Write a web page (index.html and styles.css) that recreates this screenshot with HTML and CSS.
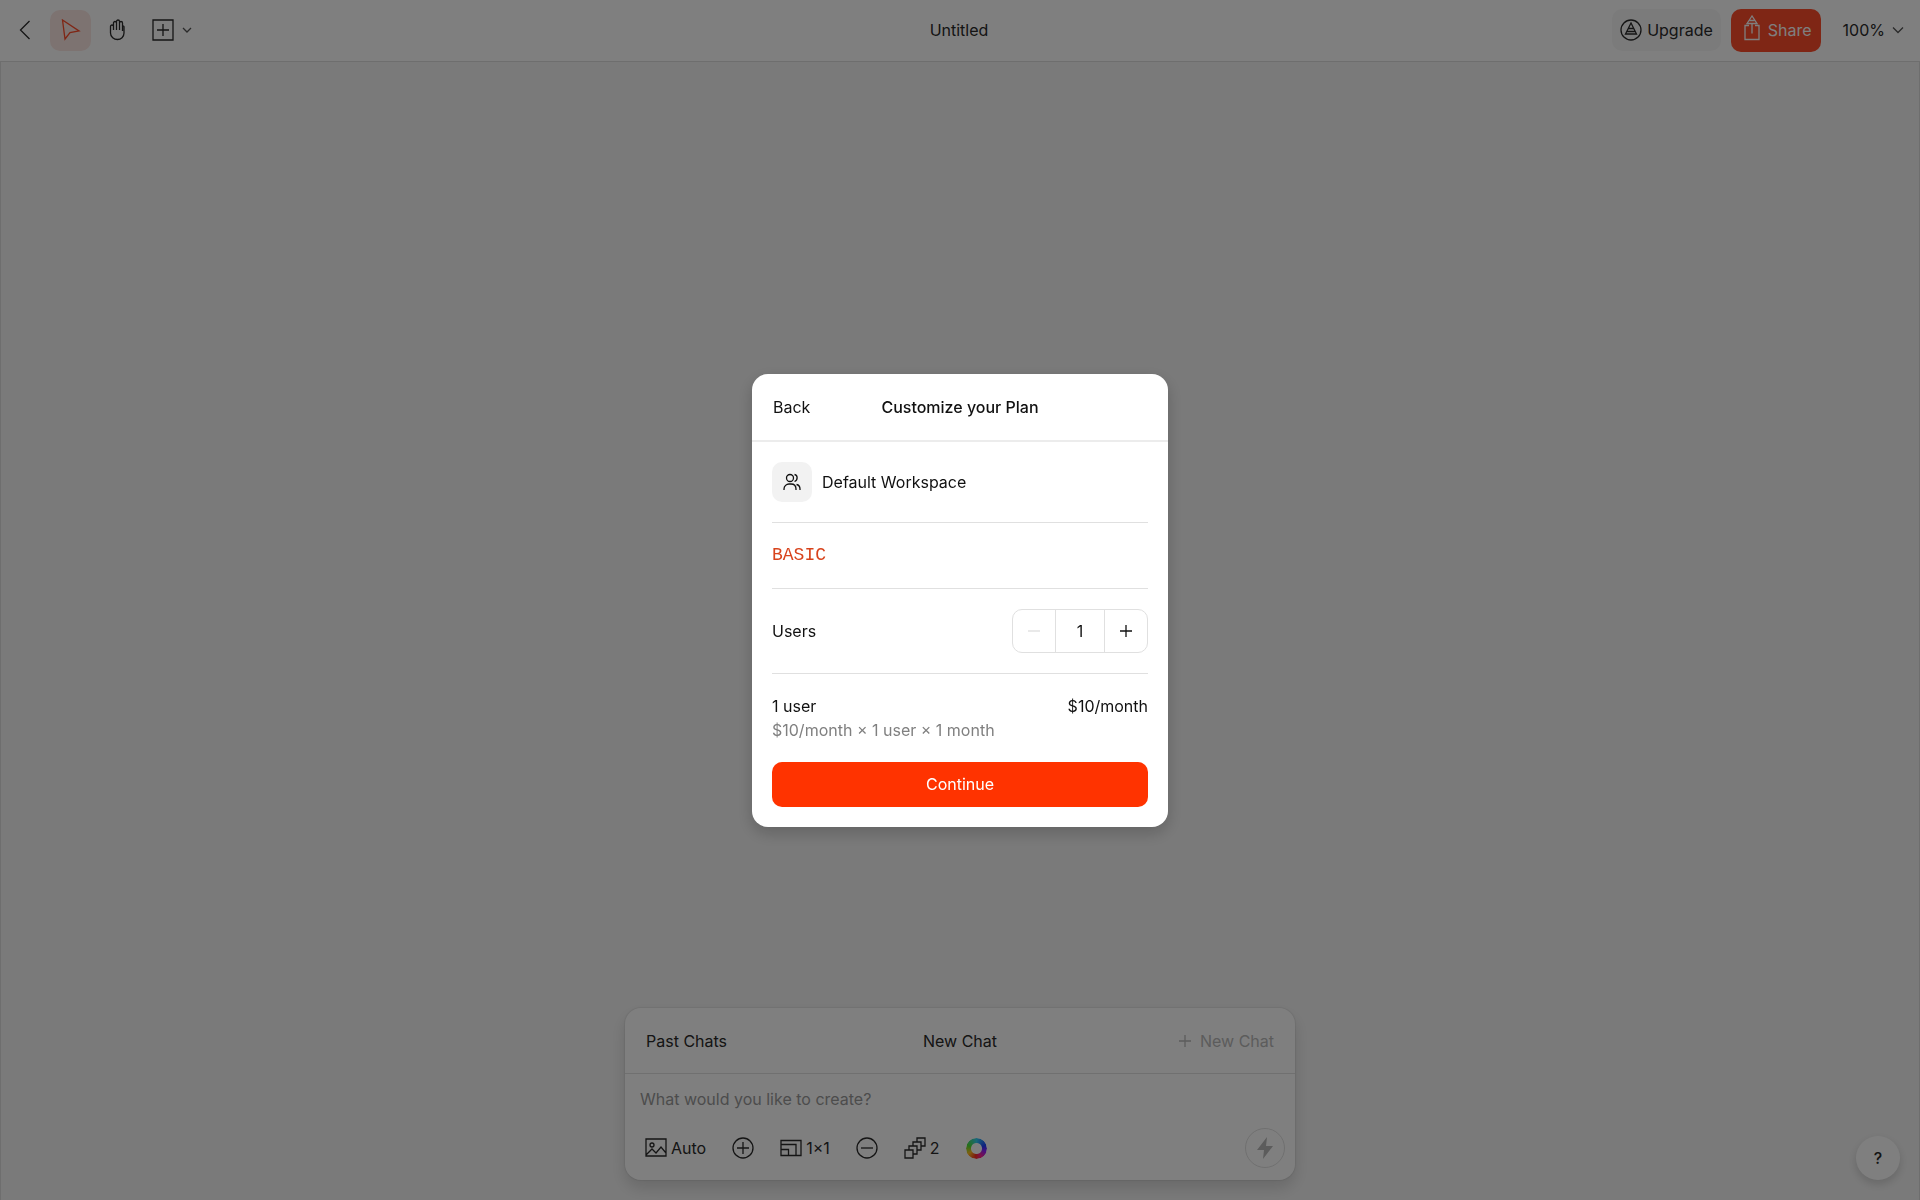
FILE: index.html
```
<!DOCTYPE html>
<html lang="en">
<head>
<meta charset="UTF-8">
<meta name="viewport" content="width=device-width, initial-scale=1">
<title>Untitled</title>
<link rel="stylesheet" href="styles.css">
</head>
<body>

<div class="app">

  <header class="topbar">
    <div class="tools">
      <button class="tool" aria-label="Back to files">
        <svg width="22" height="22" viewBox="0 0 22 22"><path d="M15.500 2 6.500 11l9 9"/></svg>
      </button>
      <button class="tool active" aria-label="Select">
        <svg width="22" height="22" viewBox="0 0 22 22"><path d="M2.500 1 19 12l-9 1.500L5 20z"/></svg>
      </button>
      <button class="tool" aria-label="Pan">
        <svg width="22" height="22" viewBox="0 0 22 22"><path d="M4.500 12V7.500a1.500 1.500 0 0 1 3 0V4a1.500 1.500 0 0 1 3 0V2.500a1.500 1.500 0 0 1 3 0V4a1.500 1.500 0 0 1 3 0v3a1 1 0 0 1 1.500 1V14c0 4-3 6.500-6.500 6.500S4.500 18 4.500 14zM7.500 7v4M10.500 4v7M13.500 4v7M16.500 6v6"/></svg>
      </button>
      <button class="tool wide" aria-label="Insert">
        <svg width="22" height="22" viewBox="0 0 22 22"><path d="M1 1h20v20H1zM11 5v12M5 11h12"/></svg>
        <svg class="caret" width="10" height="10" viewBox="0 0 10 10"><path d="m1 3 4 4 4-4"/></svg>
      </button>
    </div>

    <h1 class="doc-title">Untitled</h1>

    <div class="actions">
      <button class="upgrade">
        <svg width="22" height="22" viewBox="0 0 22 22"><circle cx="11" cy="11" r="10"/><path d="m11 4-5.500 11h11zM8.500 9.500h5M7 12.500h8"/></svg>
        Upgrade
      </button>
      <button class="share">
        <svg width="16" height="26" viewBox="0 0 16 26"><path d="M5 10.500H1v14h14v-14h-4M8 8.500v10M8 1 3 8.500h10zM5.500 5.500h5"/></svg>
        Share
      </button>
      <button class="zoom">
        100%
        <svg class="caret" width="12" height="12" viewBox="0 0 12 12"><path d="m1 3.500 5 5 5-5"/></svg>
      </button>
    </div>
  </header>

  <main class="canvas">
    <section class="chat">
      <div class="chat-head">
        <button class="link">Past Chats</button>
        <h2 class="chat-title">New Chat</h2>
        <button class="link new" disabled>
          <svg width="14" height="14" viewBox="0 0 14 14"><path d="M7 1v12M1 7h12"/></svg>
          New Chat
        </button>
      </div>
      <div class="chat-body">
        <input class="prompt" type="text" aria-label="Prompt" placeholder="What would you like to create?">
        <div class="options">
          <button class="option">
            <svg width="22" height="22" viewBox="0 0 22 22"><path d="M1 2h20v17H1zM1 18l6-6 4 4 5-6 5 6"/><circle cx="7" cy="8" r="2"/></svg>
            Auto
          </button>
          <button class="option" aria-label="Add">
            <svg width="22" height="22" viewBox="0 0 22 22"><circle cx="11" cy="11" r="10"/><path d="M11 5v12M5 11h12"/></svg>
          </button>
          <button class="option">
            <svg width="22" height="22" viewBox="0 0 22 22"><path d="M1 3.500h20v15H1zM1 7.500h15v11M1 12.500h7.500v6"/></svg>
            1×1
          </button>
          <button class="option" aria-label="Remove">
            <svg width="22" height="22" viewBox="0 0 22 22"><circle cx="11" cy="11" r="10"/><path d="M5 11h12"/></svg>
          </button>
          <button class="option">
            <svg width="22" height="22" viewBox="0 0 22 22"><path d="M1 13h8v8H1zM5 13V9h8v8H9M9 9V5h8v8h-4M13 5V1h8v8h-4"/></svg>
            2
          </button>
          <button class="option" aria-label="Color"><span class="wheel"></span></button>
          <button class="send" aria-label="Generate" disabled>
            <svg width="18" height="22" viewBox="0 0 18 22"><path d="M11 0 1 13h7l-1 9L17 9h-7z"/></svg>
          </button>
        </div>
      </div>
    </section>
    <button class="help" aria-label="Help">?</button>
  </main>

</div>

<div class="overlay">
  <form class="modal" role="dialog" aria-modal="true" aria-labelledby="plan-title">
    <div class="modal-head">
      <button type="button" class="link">Back</button>
      <h2 class="modal-title" id="plan-title">Customize your Plan</h2>
    </div>
    <div class="modal-body">
      <div class="row workspace">
        <span class="avatar">
          <svg width="18" height="18" viewBox="0 0 18 18"><circle cx="7" cy="5" r="3.500"/><path d="M1 17v-1c0-3 2.500-5 5-5h2c3 0 5 2 5 5v1M11.500 1.500c3.500.5 3.500 6 0 7M13.500 11.500c2.500.5 3.500 2.500 3.500 4.500v1"/></svg>
        </span>
        Default Workspace
      </div>
      <div class="row plan">BASIC</div>
      <div class="row users">
        <label for="users">Users</label>
        <div class="stepper">
          <button type="button" aria-label="Fewer users" disabled>
            <svg width="14" height="14" viewBox="0 0 14 14"><path d="M1 7h12"/></svg>
          </button>
          <input type="text" id="users" value="1" inputmode="numeric">
          <button type="button" aria-label="More users">
            <svg width="14" height="14" viewBox="0 0 14 14"><path d="M7 1v12M1 7h12"/></svg>
          </button>
        </div>
      </div>
      <div class="summary">
        <div class="price"><span>1 user</span><span>$10/month</span></div>
        <div class="breakdown">$10/month × 1 user × 1 month</div>
      </div>
      <button type="button" class="continue">Continue</button>
    </div>
  </form>
</div>

</body>
</html>
```

FILE: styles.css
```
* { box-sizing: border-box; margin: 0; padding: 0; }
body { font-family: Inter, "Liberation Sans", sans-serif; font-size: 16px; line-height: 24px; color: #111; background: #f5f5f5; }
h1, h2 { font-size: 16px; font-weight: 400; }
button, input { font: inherit; color: inherit; background: none; border: none; }
button { cursor: pointer; display: flex; align-items: center; justify-content: center; }
button:disabled { cursor: default; }
svg { fill: none; stroke: currentColor; stroke-width: 1.3; flex: none; }

.app { display: flex; flex-direction: column; min-height: 100vh; color: #2a2a2a; }

/* top bar */
.topbar { display: grid; grid-template-columns: 1fr auto 1fr; align-items: center; height: 61px; padding: 0 6px 1px 4px; background: #fff; }
.tools, .actions { display: flex; align-items: center; }
.tools { gap: 5px; }
.tool { width: 41px; height: 41px; border-radius: 10px; }
.tool.active { background: #fbe6e2; color: #ff4c2a; }
.tool.wide { width: 60px; gap: 8px; }
.caret { color: #555; }
.actions { justify-content: flex-end; gap: 10px; }
.upgrade { height: 42px; padding: 0 8px; gap: 5px; border-radius: 10px; background: #f7f7f7; }
.share { height: 43px; padding: 0 9px 0 13px; gap: 8px; border-radius: 10px; background: #ff4c2a; color: #fff; }
.share svg { align-self: flex-start; margin-top: 6px; }
.zoom { height: 42px; padding: 0 10px 0 12px; gap: 7px; }

/* canvas */
.canvas { flex: 1; display: flex; flex-direction: column; align-items: center; justify-content: flex-end; padding: 20px; border: 1px solid #dcdcdc; border-bottom: none; }
.help { position: absolute; right: 20px; bottom: 20px; width: 44px; height: 44px; border-radius: 50%; background: #fff; box-shadow: 0 4px 10px rgba(0,0,0,.16); font-weight: 500; }

/* chat */
.chat { width: 100%; max-width: 670px; background: #fff; border-radius: 16px; box-shadow: 0 0 1px 1px rgba(0,0,0,.06), 0 8px 16px rgba(0,0,0,.14); }
.chat-head { display: grid; grid-template-columns: 1fr auto 1fr; align-items: center; height: 66px; padding: 0 21px; border-bottom: 1px solid #e0e0e0; }
.chat-head .link { justify-self: start; }
.chat-head .new { justify-self: end; gap: 8px; color: #b8b8b8; }
.chat-body { padding: 13px 10px 12px; }
.prompt { display: block; width: 100%; height: 24px; padding: 0 5px; outline: none; }
.prompt::placeholder { color: #999; }
.options { display: flex; align-items: center; gap: 6px; margin-top: 17px; }
.option { height: 40px; padding: 0 10px; gap: 4px; }
.wheel { width: 21px; height: 21px; border-radius: 50%; background: conic-gradient(#30d0f0, #2040ff 20%, #9020ff 30%, #ff2090 42%, #ff3020 52%, #ffc020 66%, #50e030 80%, #30d0f0); -webkit-mask: radial-gradient(circle, transparent 5px, #000 6px); mask: radial-gradient(circle, transparent 5px, #000 6px); }
.send { width: 40px; height: 40px; margin-left: auto; border: 1px solid #e0e0e0; border-radius: 50%; color: #b8b8b8; }
.send svg { fill: currentColor; stroke: none; }

/* plan dialog */
.overlay { position: fixed; inset: 0; display: flex; align-items: center; justify-content: center; background: rgba(0,0,0,.5); }
.modal { width: 416px; max-width: calc(100% - 40px); background: #fff; border-radius: 16px; box-shadow: 0 6px 16px rgba(0,0,0,.2); }
.modal-head { display: grid; grid-template-columns: 1fr auto 1fr; align-items: center; height: 68px; padding: 0 21px; border-bottom: 2px solid #ececec; }
.modal-head .link { justify-self: start; }
.modal-title { font-weight: 500; }
.modal-body { padding: 0 20px 20px; }
.row { display: flex; align-items: center; padding: 20px 0; border-bottom: 1px solid #e0e0e0; }
.workspace { gap: 10px; }
.avatar { display: flex; align-items: center; justify-content: center; width: 40px; height: 40px; border-radius: 10px; background: #f2f2f2; }
.plan { font-family: "Liberation Mono", monospace; font-size: 18px; line-height: 25px; color: #d8431c; }
.users { justify-content: space-between; }
.stepper { display: flex; height: 44px; border: 1px solid #e0e0e0; border-radius: 10px; }
.stepper button { width: 42px; }
.stepper button:disabled { color: #ddd; }
.stepper input { width: 50px; text-align: center; border: solid #e0e0e0; border-width: 0 1px; outline: none; }
.summary { padding: 20px 0; }
.price { display: flex; justify-content: space-between; }
.breakdown { color: #808080; }
.continue { width: 100%; height: 45px; border-radius: 10px; background: #ff3300; color: #fff; }
```
